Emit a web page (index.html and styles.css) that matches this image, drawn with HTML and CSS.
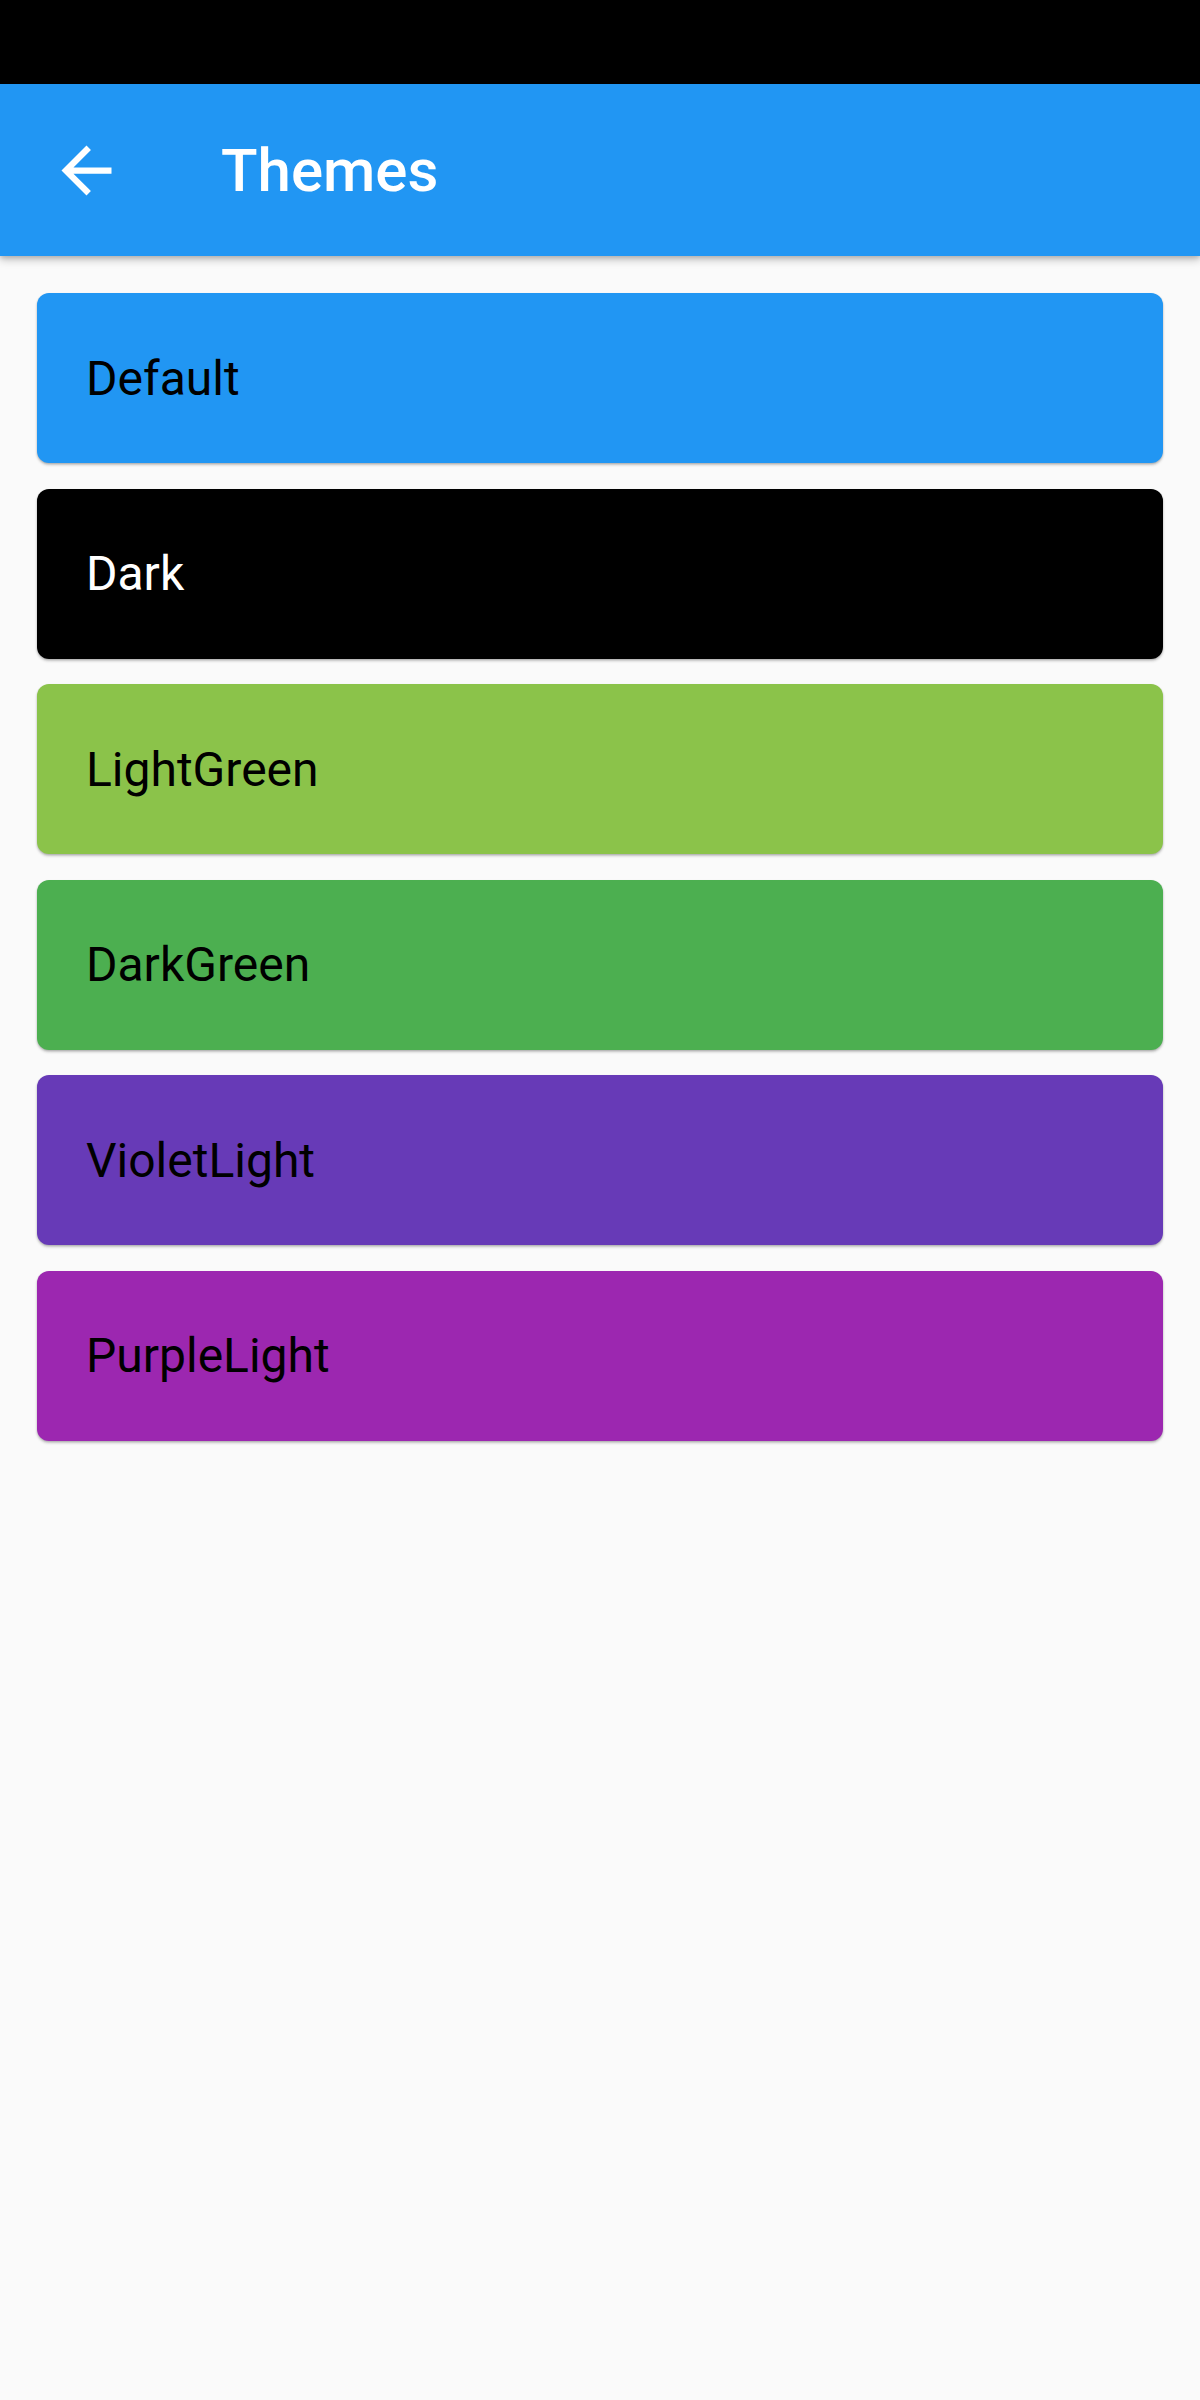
FILE: index.html
```html
<!DOCTYPE html>
<html>
  <head>
    <meta charset="utf-8">
    <title>Themes</title>
    <link rel="stylesheet" href="styles.css">
  </head>
  <body>
    <!-- Barra de estado -->
    <div class="status-bar"></div>

    <!-- Barra superior -->
    <header class="app-bar">
      <button class="back-btn" aria-label="Back">
        <svg viewBox="0 0 24 24" width="75" height="75">
          <path fill="#ffffff" d="M20 11H7.83l5.59-5.59L12 4l-8 8 8 8 1.41-1.41L7.83 13H20v-2z"/>
        </svg>
      </button>
      <h1 class="title">Themes</h1>
    </header>

    <!-- Lista de temas -->
    <main class="theme-list">
      <div class="theme-card default"><span>Default</span></div>
      <div class="theme-card dark"><span>Dark</span></div>
      <div class="theme-card light-green"><span>LightGreen</span></div>
      <div class="theme-card dark-green"><span>DarkGreen</span></div>
      <div class="theme-card violet-light"><span>VioletLight</span></div>
      <div class="theme-card purple-light"><span>PurpleLight</span></div>
    </main>
  </body>
</html>
```

FILE: styles.css
```css
body {
  margin: 0;
  min-height: 2400px;
  background: #fafafa;
  font-family: Roboto, "Noto Sans", Arial, sans-serif;
}

.status-bar {
  height: 84px;
  background: #000000;
}

.app-bar {
  display: flex;
  align-items: center;
  height: 172px;
  background: #2196f3;
  box-shadow: 0 4px 8px rgba(0, 0, 0, 0.22), 0 2px 4px rgba(0, 0, 0, 0.12);
  position: relative;
  z-index: 1;
}

.back-btn {
  display: flex;
  align-items: center;
  justify-content: center;
  width: 75px;
  height: 75px;
  margin-left: 49px;
  padding: 0;
  border: none;
  background: none;
}

.title {
  margin: 0 0 0 97px;
  color: #ffffff;
  font-size: 60px;
  font-weight: 500;
}

.theme-list {
  display: flex;
  flex-direction: column;
  gap: 25.5px;
  padding: 37px;
}

.theme-card {
  display: flex;
  align-items: center;
  height: 170px;
  padding: 0 49px;
  border-radius: 12px;
  font-size: 48px;
  color: #000000;
  box-shadow: 0 2px 3px rgba(0, 0, 0, 0.2), 0 1px 2px rgba(0, 0, 0, 0.14);
}

.default {
  background: #2196f3;
}

.dark {
  background: #000000;
  color: #ffffff;
}

.light-green {
  background: #8bc34a;
}

.dark-green {
  background: #4caf50;
}

.violet-light {
  background: #673ab7;
}

.purple-light {
  background: #9c27b0;
}
```
